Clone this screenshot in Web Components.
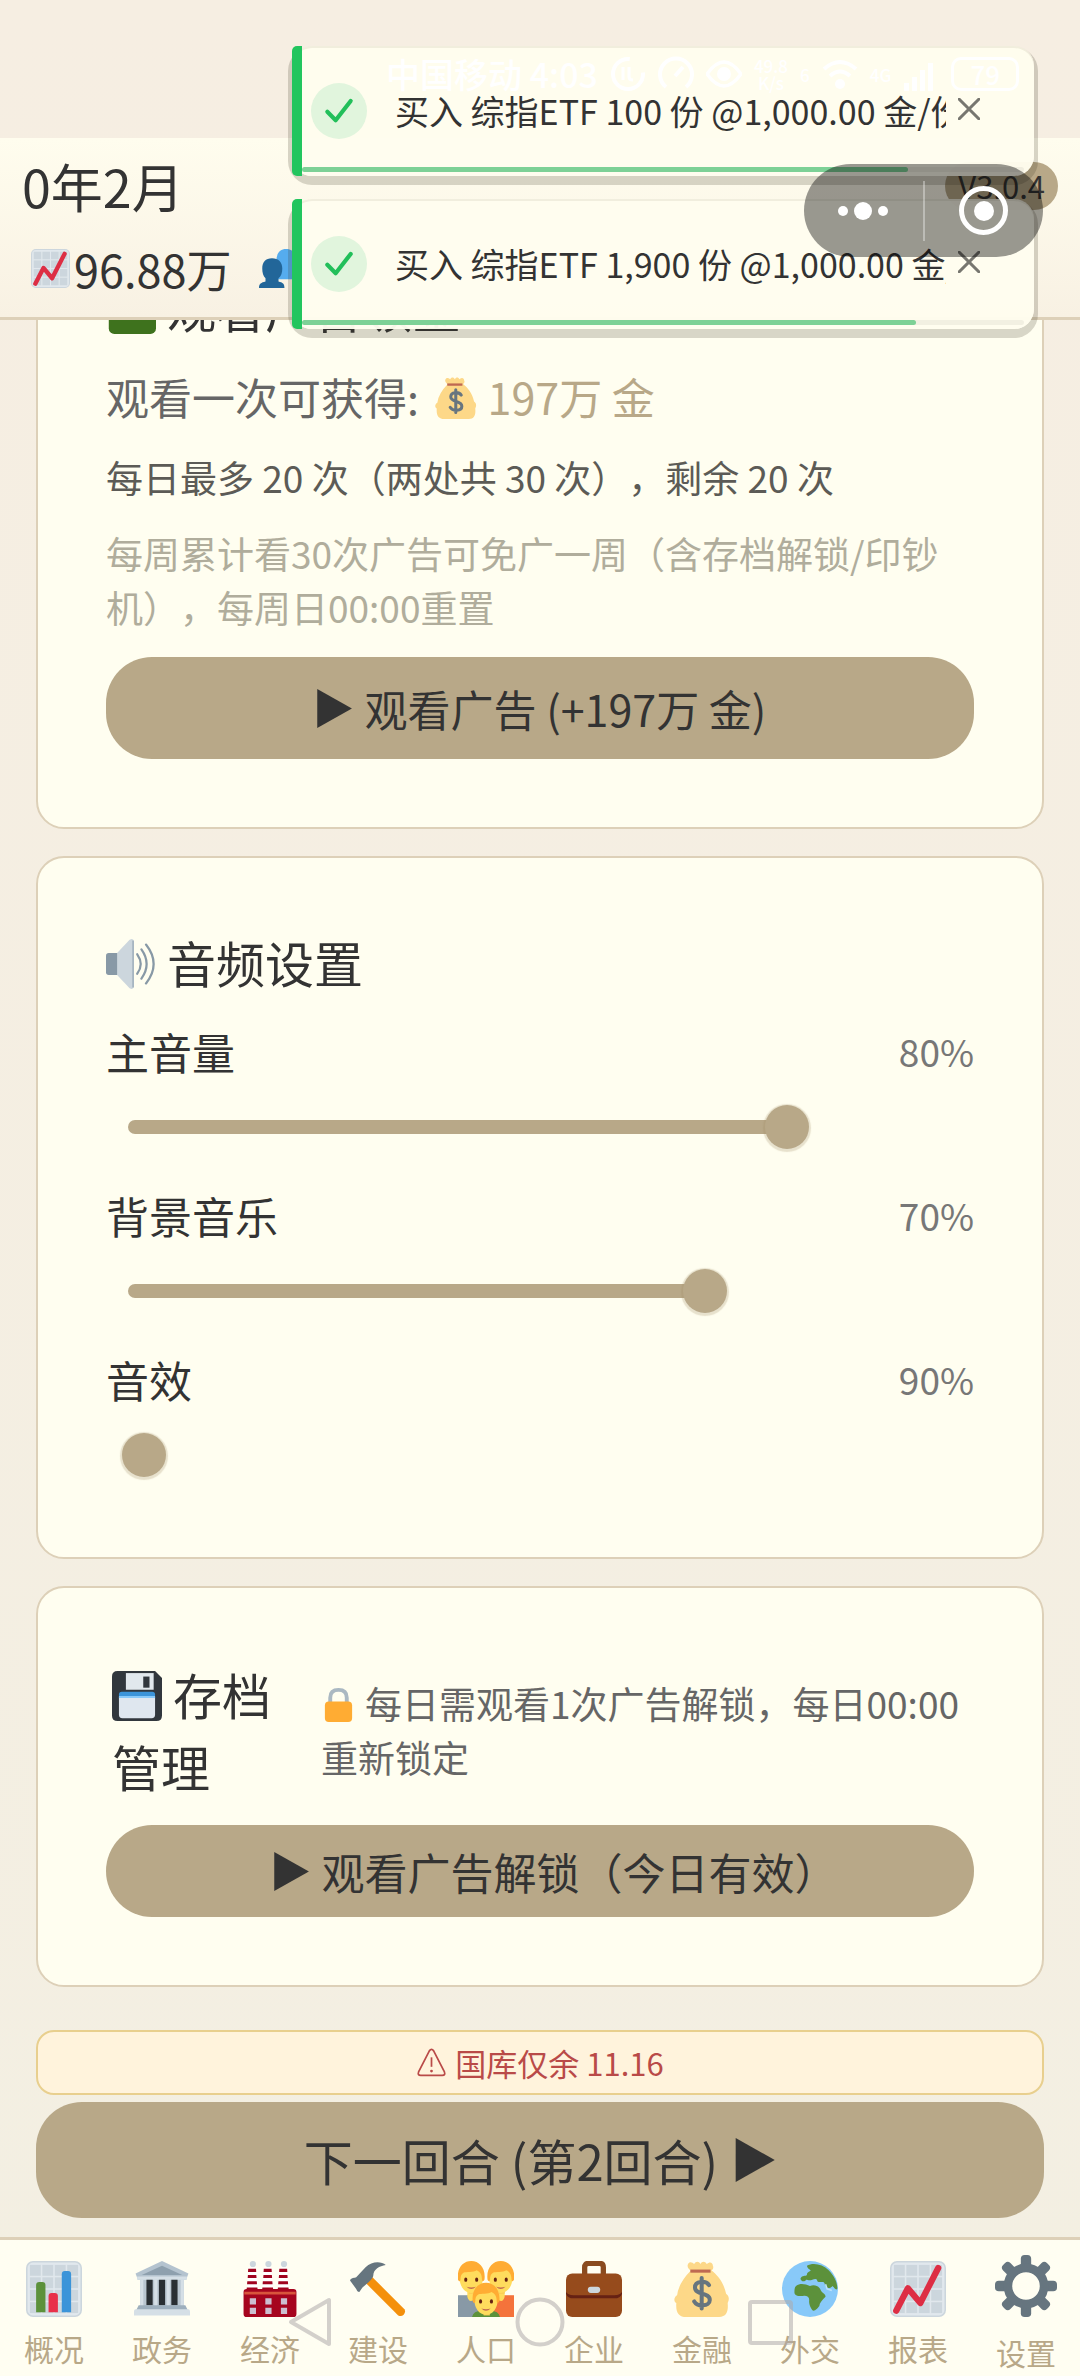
<!DOCTYPE html>
<html lang="zh-CN">
<head>
<meta charset="utf-8">
<meta name="viewport" content="width=device-width">
<title>设置</title>
<style>
  html { --tan: #b8a888; --ink: #333; --paper: #fffef0; --line: #ddd0b8; }
  body {
    margin: 0; min-height: 100vh; color: var(--ink);
    font-family: "Noto Sans CJK SC", sans-serif;
    text-spacing-trim: space-all;
    background: linear-gradient(#f6eee2, #f3efe2);
  }
</style>
</head>
<body>
<game-app></game-app>
<script>
const define = (name, css, html, setup) => {
  const t = document.createElement('template');
  t.innerHTML = `<style>*{box-sizing:border-box}:host{display:block}${css}</style>${html}`;
  customElements.define(name, class extends HTMLElement {
    connectedCallback() {
      if (this.shadowRoot) return;
      this.attachShadow({ mode: 'open' }).append(t.content.cloneNode(true));
      if (setup) setup(this, this.shadowRoot);
    }
  });
};

const grid = (() => {
  let s = '<rect x=".5" y=".5" width="35" height="35" rx="4" fill="#e1e8ed" stroke="#ccd6dd"/>';
  for (const x of [2.5, 10.5, 18.5, 26.5]) for (const y of [2.5, 10.5, 18.5, 26.5]) s += `<rect x="${x}" y="${y}" width="7" height="7" fill="#ccd6dd"/>`;
  return s;
})();
const person = (x, y) => `<g transform="translate(${x} ${y})">
  <path d="M7 13h4v8h-4z" fill="#f9ca55"/><path d="M1 11c0 5 3 9.500 7.500 9.500s7.500-4.500 7.500-9.500c0-4-3-6-7.500-6s-7.500 2-7.500 6z" fill="#ffdc5d"/>
  <path d="M0 12c-1-7 3-12 8.500-12s9.500 5 8.500 12c-.5 1-1.300 1.500-1.600 0 0-3-1-5-3.400-6-2 1.500-7 1-8.500 1.500-1.500.8-1.900 2.500-1.900 4.500-.3 1.500-1.200 1-1.600 0z" fill="#ffac33"/>
  <ellipse cx="5" cy="12" rx="1" ry="1.400" fill="#662113"/><ellipse cx="12" cy="12" rx="1" ry="1.400" fill="#662113"/>
  <path d="M5.500 16.500q3 1 6 0q-3 3-6 0z" fill="#c1694f"/></g>`;
const chimney = x => `<circle cx="${x + 3}" cy="2" r="2" fill="#ccd6dd"/><path d="M${x} 4h5l1.200 15h-7z" fill="#fff"/>
  <path d="M${x} 5h5l.15 2h-5.300zM${x - .2} 9h5.400l.15 2h-5.700zM${x - .6} 13h6.100l.15 2h-6.400zM${x - .9} 17h6.800l.2 2h-7.200z" fill="#a0041e"/>`;
const windows = [5, 15, 25].map(x => `<path d="M${x} 24h4v4h-4zM${x} 30h4v4h-4z" fill="#ccbfd0"/>`).join('');
const teeth = [0, 45, 90, 135, 180, 225, 270, 315].map(a => `<rect x="15" y="0" width="6" height="9" rx="2.200" transform="rotate(${a} 18 18)"/>`).join('');

const ICONS = {
  trend: grid + '<path d="M4 32L11.500 17.500L19.500 27L31 4.500" fill="none" stroke="#dd2e44" stroke-width="4" stroke-linecap="round" stroke-linejoin="round"/>',
  bars: grid + '<path d="M6.500 33V15.500q0-2 2-2h2q2 0 2 2V33z" fill="#5c913b"/><path d="M14.500 33V22.500q0-2 2-2h2q2 0 2 2V33z" fill="#e8304a"/><path d="M23 33V8.500q0-2 2-2h2q2 0 2 2V33z" fill="#3b94d9"/>',
  people: '<path d="M16 12C16 4 19 0 25 0s9 4 9 11c0 4-1 7-3 9v3c4 1 5 2 5 5H14z" fill="#55acee"/><path d="M3 18c0-6 3-9.500 9-9.500s9.500 3.500 9.500 9.500c0 4-1 7-3.500 9v3c4 1 5.500 2 5.500 6H0c0-4 2-5 6-6v-3c-2-2-3-5-3-9z" fill="#226699"/>',
  cash: '<rect x="2" width="34" height="36" rx="4" fill="#3e721d"/><path d="M6 6h26v16h-26z" fill="#5c913b"/>',
  bag: '<path d="M11 6Q3 14 2 22c-2 1-2.500 4-.5 5C1 33 3 36 8 36h21c5 0 6-4 5.500-9C36 24 35 22 33.500 21 32 14 28 9 24 6z" fill="#fdd888"/><path d="M9 2c1-2 3-1 4 0 1-2 3-2 4 0 1-2 3-2 4 0 2-2 4-1 4 1 1 2-1 3-2 4H12c-2-1-4-3-3-5z" fill="#fdd888"/><path d="M10.500 5.500h13v2h-13z" fill="#bf6952"/><path d="M22.500 15.500c-2-3-9-3-9 1.500 0 5 9.500 3 9.500 8 0 4.500-8 4.500-10 1M17.800 11v19.500" fill="none" stroke="#67757f" stroke-width="2.600" stroke-linecap="round"/>',
  speaker: '<path d="M2 10h7v16h-7q-2 0-2-2v-12q0-2 2-2z" fill="#8899a6"/><path d="M8 10L17 .5q3-1.500 3 1.500v32q0 3-3 1.500L8 26z" fill="#ccd6dd"/><path d="M19.500 1v34" stroke="#9aabb8"/><path d="M22.500 11q5 7 0 14M25.500 7.500q7.500 10.500 0 21M28.800 4q11 14 0 28" fill="none" stroke="#8899a6" stroke-width="1.600" stroke-linecap="round"/>',
  floppy: '<path d="M4 0h27l5 5v27q0 4-4 4H4q-4 0-4-4V4q0-4 4-4z" fill="#31373d"/><path d="M10 1.500h20v12h-20z" fill="#e1e8ed"/><path d="M22.500 4h4.500v8h-4.500z" fill="#31373d"/><path d="M5 17q0-2 2-2h22q2 0 2 2v4H5z" fill="#3b94d9"/><path d="M5 18.500h26v13q0 2.500-2.500 2.500h-21Q5 34 5 31.500z" fill="#dfe7ef"/><path d="M5 18h26v1.500H5z" fill="#88c9f9"/>',
  lock: '<path d="M9.500 19V11q0-8 8.500-8t8.500 8v8" fill="none" stroke="#aab8c2" stroke-width="4"/><rect x="4" y="15" width="28" height="21" rx="4" fill="#ffac33"/>',
  bank: '<path d="M4 12h28v18H4z" fill="#b9c6d0"/><path d="M18 0L35 8l-1.500 4H2.500L1 8z" fill="#b4c3cf"/><path d="M18 3L31 9H5z" fill="#8ea0ae"/><path d="M2 10h32v2H2z" fill="#d5dfe6"/><path d="M8 12h4v16.500H8zM16 12h4v16.500h-4zM24 12h4v16.500h-4z" fill="#292f33"/><path d="M4 12h2v17H4zM13 12h2v17h-2zM21 12h2v17h-2zM30 12h2v17h-2z" fill="#d5dfe6"/><path d="M3 28.500h30l2 4H1z" fill="#9dafbd"/><path d="M1 31h34q1 0 1 2v2H0v-2q0-2 1-2z" fill="#d5dfe6"/>',
  factory: chimney(4) + chimney(14) + chimney(24) + '<rect x="1" y="18" width="34" height="18" rx="2" fill="#a6051f"/><path d="M1.500 19.800h33v1.700h-33z" fill="#d8553c"/>' + windows,
  hammer: '<path d="M7 11l5-3L35 31q1 2-.5 3.500t-3.500.5z" fill="#f4900c"/><path d="M0 12.500c1-2 3-1.500 4-2L10 4c4-4 10-4 13-1.500-4 .5-8 3-8 6.500 0 2-2.500 4-4 5.500L8 17l-2 3c-1 0-1.500-1-2-2z" fill="#66757f"/>',
  family: '<path d="M0 22h16v14H0z" fill="#8899a6"/><path d="M20 22h16v14H20z" fill="#f4733b"/><path d="M6 18h4v7q-3 2-4-2zM26 18h4v5q-1 4-4 2z" fill="#ffdc5d"/>' + person(0, 0) + person(19, 0) + '<path d="M9 36q1-4 6-4h6q5 0 6 4z" fill="#5c913b"/><path d="M15 30h6v3q-3 2-6 0z" fill="#f9ca55"/>' + person(9.5, 14),
  case: '<path d="M12 9V4q0-2.500 2.500-2.500h7q2.500 0 2.500 2.500v5" fill="none" stroke="#8a4b20" stroke-width="3.400"/><rect y="8" width="36" height="28" rx="4" fill="#964b1c"/><path d="M0 20v1q1 3 5 3h26q4 0 5-3v-1q-1 2-5 2H5q-4 0-5-2z" fill="#662113"/><rect x="14" y="16.500" width="8" height="4" rx="2" fill="#ccd6dd"/>',
  globe: '<circle cx="18" cy="18" r="18" fill="#88c9f9"/><path d="M16 3c4-2 10-1 14 3 3 3 6 8 5.500 12-1 1-2-1-3-2-1 1-2 2-3.500 1-2-1-1-3-2.500-3.500-2 0-4 .5-4-1.500-1-1-2 0-3 0-2 1-3 0-4 0-1 2-4 1-3.500-1 1-2 3-1 4-2 0-2 2-2 2.500-3-1-1-2-1-2.500-3z" fill="#5c913b"/><path d="M9 16c3-2 6-1 9 0 3-1 6 0 7 3 1 2 3 2 3 4-2 2-4 4-4 6-1 1-2 3-4 3-1-1-3-4-2.500-7 0-2-2-3-4-2.500-3 0-5 0-5.500-2 0-2 0-3.500 1-4.500z" fill="#5c913b"/><path d="M28 15l1 3 3 1" fill="none" stroke="#bfe3fb" stroke-width="1"/>',
  gear: `<g fill="#66757f">${teeth}</g><circle cx="18" cy="18" r="10.500" fill="none" stroke="#66757f" stroke-width="5"/>`,
  warn: '<path d="M15.500 4.500q2.500-3.500 5 0L33 29q1.500 4-2.500 4h-25Q1.500 33 3 29z" fill="none" stroke="currentColor" stroke-width="2"/><path d="M18 12v11" stroke="currentColor" stroke-width="2"/><circle cx="18" cy="28" r="1.600" fill="currentColor"/>',
  play: '<path d="M3 0L35 18L3 36z" fill="currentColor"/>',
  check: '<path d="M4 19L14 29L32 6" fill="none" stroke="currentColor" stroke-width="5" stroke-linecap="round" stroke-linejoin="round"/>',
  close: '<path d="M2 2L34 34M34 2L2 34" fill="none" stroke="currentColor" stroke-width="5" stroke-linecap="round"/>',
  sync: '<circle cx="18" cy="18" r="15" fill="none" stroke="currentColor" stroke-width="4" stroke-dasharray="72 20"/><path d="M13 11v13M19 11v10q0 3 4 3" fill="none" stroke="currentColor" stroke-width="3"/>',
  gauge: '<path d="M8 31A16 16 0 1 1 28 31M17 20L25 11" fill="none" stroke="currentColor" stroke-width="4"/>',
  eye: '<path d="M1 18Q18-6 35 18Q18 42 1 18z" fill="none" stroke="currentColor" stroke-width="3.500"/><circle cx="18" cy="18" r="7" fill="currentColor"/>',
  wifi: '<path d="M2 13Q18-1 34 13M8 20Q18 11 28 20" fill="none" stroke="currentColor" stroke-width="4"/><circle cx="18" cy="28" r="5" fill="currentColor"/>',
  signal: '<path d="M1 27h5v8h-5zM9 21h5v14h-5zM17 14h5v21h-5zM25 7h5v28h-5z" fill="currentColor"/>'
};

define('g-icon', ':host{display:inline-block;flex:none;width:1em;height:1em}svg{display:block;width:100%;height:100%}',
  '<svg viewBox="0 0 36 36" aria-hidden="true"></svg>',
  (el, root) => { root.querySelector('svg').innerHTML = ICONS[el.getAttribute('name')]; });

define('status-strip', `
  :host { position: relative; z-index: 4; height: 138px; padding: 56px 54px 0 386px; color: #fff; pointer-events: none; }
  div { display: flex; align-items: center; gap: 12px; height: 36px; font-size: 34px; line-height: 36px; font-weight: 500; white-space: nowrap; }
  small { font-size: 17px; line-height: 17px; text-align: center; }
  g-icon { font-size: 36px; }
  b { border: 3px solid #fff; border-radius: 10px; font-size: 26px; line-height: 28px; padding: 0 16px; font-weight: 500; }`,
  `<div><span>中国移动 4:03</span><g-icon name="sync"></g-icon><g-icon name="gauge"></g-icon><g-icon name="eye"></g-icon><small>49.8<br>K/s</small><small>6</small><g-icon name="wifi"></g-icon><small>4G</small><g-icon name="signal"></g-icon><b>79</b></div>`);

define('game-header', `
  :host { position: relative; z-index: 1; padding: 10px 22px 16px; background: linear-gradient(#fffdee, #f8f1e3); border-bottom: 3px solid var(--line); }
  div { display: flex; align-items: center; justify-content: space-between; }
  h1 { margin: 0; font-size: 52px; line-height: 76px; font-weight: 400; }
  .ver { background: var(--tan); border-radius: 24px; padding: 0 13px; font-size: 31px; line-height: 48px; }
  .stats { justify-content: flex-start; margin-top: 12px; padding-left: 9px; font-size: 45px; line-height: 65px; }
  g-icon { font-size: 39px; }
  .stats span { margin: 0 28px 0 4px; }`,
  `<div><h1>0年2月</h1><span class="ver">V3.0.4</span></div>
   <div class="stats"><g-icon name="trend"></g-icon><span>96.88万</span><g-icon name="people"></g-icon></div>`);

define('toast-item', `
  :host { position: relative; display: flex; align-items: center; height: 130px; padding: 0 54px 0 19px;
    background: rgba(255,253,238,.97); border-radius: 20px; box-shadow: inset 0 2px 0 rgba(80,60,20,.08), 0 5px 0 4px rgba(60,55,35,.2); }
  :host::before { content: ""; position: absolute; inset: 0 auto 0 0; width: 10px; background: #22c55e; border-radius: 5px 0 0 5px; }
  .ok { flex: none; display: grid; place-items: center; width: 56px; height: 56px; border-radius: 50%; background: #e1f5dd; color: #22bf5a; font-size: 30px; }
  p { flex: 1; min-width: 0; margin: 0 12px 0 28px; overflow: hidden; white-space: nowrap; font-size: 34px; line-height: 40px; padding: 2px 0; }
  button { flex: none; display: block; border: 0; padding: 0; background: none; color: #77766f; font-size: 22px; line-height: 22px; }
  .track { position: absolute; inset: auto 10px 4px 10px; height: 5px; border-radius: 3px; background: rgba(0,0,0,.05); }
  .track i { display: block; height: 5px; border-radius: 3px; background: #7dd196; }`,
  `<span class="ok"><g-icon name="check"></g-icon></span><p><slot></slot></p><button aria-label="关闭"><g-icon name="close"></g-icon></button><div class="track"><i></i></div>`,
  (el, root) => { root.querySelector('i').style.width = el.getAttribute('progress') + '%'; });

define('mini-capsule', `
  :host { display: flex; align-items: center; width: 239px; height: 93px; border-radius: 47px; background: rgba(0,0,0,.4); }
  button { flex: 1; display: flex; align-items: center; justify-content: center; gap: 6px; height: 93px; border: 0; padding: 0; background: none; }
  i { width: 10px; height: 10px; border-radius: 50%; background: #fff; }
  i.big { width: 18px; height: 18px; }
  hr { margin: 0; border: 0; width: 2px; height: 60px; background: rgba(255,255,255,.35); }
  .ring { display: grid; place-items: center; width: 49px; height: 49px; border: 5px solid #fff; border-radius: 50%; }
  .ring i { width: 20px; height: 20px; }`,
  `<button aria-label="更多"><i></i><i class="big"></i><i></i></button><hr><button aria-label="关闭"><span class="ring"><i></i></span></button>`);

define('game-card', `
  :host { display: flex; flex-direction: column; gap: 21px; padding: 68px; background: var(--paper); border: 2px solid var(--line); border-radius: 28px; }
  ::slotted(pill-button) { margin-top: 2px; }`,
  `<slot></slot>`);

define('card-title', `
  h2 { margin: 0; font-size: 49px; line-height: 72px; font-weight: 400; }
  g-icon { font-size: 50px; vertical-align: -6px; margin-right: 11px; }`,
  `<h2><slot></slot></h2>`, (el, root) => {
    const icon = document.createElement('g-icon');
    icon.setAttribute('name', el.getAttribute('icon'));
    root.querySelector('h2').prepend(icon);
  });

define('pill-button', `
  button { display: flex; align-items: center; justify-content: center; gap: 12px; width: 100%; border: 0; border-radius: 46px;
    padding: var(--pad, 14px) 0; background: var(--tan); color: var(--ink); font: inherit; font-size: 43px; line-height: 64px; }
  :host([large]) button { font-size: 49px; line-height: 72px; }
  g-icon { font-size: 39px; }
  :host([large]) g-icon { font-size: 44px; }
  :host([large]) button { flex-direction: row-reverse; gap: 14px; }
  /* a closing full-width bracket hangs, so the visible glyphs stay centred */
  :host([hang]) span { margin-right: -28px; }`,
  `<button><g-icon name="play"></g-icon><span><slot></slot></span></button>`);

define('ad-info', `
  :host { display: flex; flex-direction: column; gap: 21px; }
  p { margin: 0; color: #666; font-size: 43px; line-height: 64px; }
  p.limit { font-size: 37px; line-height: 56px; color: #5c5b56; }
  p.note { font-size: 37px; line-height: 54px; color: #b0ad9c; }
  strong { font-weight: 400; color: var(--tan); }
  g-icon { font-size: 42px; vertical-align: -4px; margin: 0 11px 0 6px; }`,
  `<p>观看一次可获得: <g-icon name="bag"></g-icon><strong>197万 金</strong></p>
   <p class="limit">每日最多 20 次（两处共 30 次），剩余 20 次</p>
   <p class="note">每周累计看30次广告可免广一周（含存档解锁/印钞机），每周日00:00重置</p>`);

define('volume-slider', `
  :host { padding-bottom: 34px; }
  :host(:last-of-type) { padding-bottom: 12px; }
  .row { display: flex; justify-content: space-between; align-items: center; font-size: 43px; line-height: 64px; }
  output { color: #777; font-size: 37px; }
  .box { display: grid; align-items: center; margin-top: 22px; }
  .box > * { grid-area: 1 / 1; }
  .fill { margin: 0 22px; }
  .fill i { display: block; height: 14px; border-radius: 7px; background: var(--tan); }
  :host(.idle) .fill { visibility: hidden; }
  input { -webkit-appearance: none; appearance: none; width: 100%; height: 44px; margin: 0; background: none; }
  input::-webkit-slider-thumb { -webkit-appearance: none; width: 44px; height: 44px; border-radius: 50%; background: var(--tan); box-shadow: 0 1px 1px 2px rgba(160,140,100,.25); }`,
  `<div class="row"><label for="range"></label><output for="range"></output></div>
   <div class="box"><div class="fill"><i></i></div><input id="range" type="range" min="0" max="100"></div>`,
  (el, root) => {
    root.querySelector('label').textContent = el.getAttribute('label');
    root.querySelector('output').textContent = el.getAttribute('shown') + '%';
    root.querySelector('input').value = el.getAttribute('value');
    root.querySelector('i').style.width = el.getAttribute('value') + '%';
  });

define('save-head', `
  :host { display: grid; grid-template-columns: 180px 1fr; gap: 29px; align-items: center; padding: 2px 6px 0; }
  p { margin: 0; color: #666; font-size: 37px; line-height: 54px; }
  g-icon { font-size: 35px; vertical-align: -3px; margin-right: 9px; }`,
  `<card-title icon="floppy">存档管理</card-title><p><g-icon name="lock"></g-icon>每日需观看1次广告解锁，每日00:00重新锁定</p>`);

define('turn-bar', `
  :host { display: flex; flex-direction: column; gap: 7px; padding: 43px 36px 19px; }
  .warn { display: flex; align-items: center; justify-content: center; gap: 8px; border: 2px solid #e8cf8e; border-radius: 18px;
    background: #fff3dc; color: #b94a48; font-size: 31px; line-height: 61px; }`,
  `<div class="warn" role="alert"><g-icon name="warn"></g-icon>国库仅余 11.16</div><pill-button large style="--pad:22px">下一回合 (第2回合)</pill-button>`);

define('nav-item', `
  a { display: flex; flex-direction: column; align-items: center; color: var(--tan); text-decoration: none; font-size: 30px; line-height: 44px; }
  g-icon { font-size: 56px; margin: 21px 0 9px; }
  :host([current]) g-icon { font-size: 62px; margin: 15px 0 13px; }`,
  `<a href="#"><span><slot></slot></span></a>`, (el, root) => {
    const icon = document.createElement('g-icon');
    icon.setAttribute('name', el.getAttribute('icon'));
    root.querySelector('a').prepend(icon);
  });

define('nav-bar', `
  :host { flex: 1; background: #fffef2; border-top: 3px solid var(--line); }
  nav { display: grid; grid-template-columns: repeat(10, 1fr); }`,
  `<nav><nav-item icon="bars">概况</nav-item><nav-item icon="bank">政务</nav-item><nav-item icon="factory">经济</nav-item><nav-item icon="hammer">建设</nav-item><nav-item icon="family">人口</nav-item><nav-item icon="case">企业</nav-item><nav-item icon="bag">金融</nav-item><nav-item icon="globe">外交</nav-item><nav-item icon="trend">报表</nav-item><nav-item icon="gear" current>设置</nav-item></nav>`);

define('system-keys', `
  :host { display: flex; justify-content: space-between; align-items: center; height: 50px; color: rgba(175,170,172,.55); }
  svg { display: block; width: 50px; height: 50px; fill: none; stroke: currentColor; stroke-width: 4; stroke-linejoin: round; }`,
  `<svg viewBox="0 0 50 50"><path d="M6 25L44 3V47z"/></svg><svg viewBox="0 0 50 50"><circle cx="25" cy="25" r="22.500"/></svg><svg viewBox="0 0 50 50"><rect x="5" y="5" width="41" height="41" rx="2"/></svg>`);

define('game-app', `
  :host { position: relative; display: flex; flex-direction: column; min-height: 100vh; }
  main { display: flex; flex-direction: column; gap: 27px; margin-top: -119px; padding: 0 36px; }
  .toasts { position: absolute; z-index: 2; top: 46px; right: 46px; left: 292px; display: flex; flex-direction: column; gap: 23px; }
  mini-capsule { position: absolute; z-index: 3; top: 164px; right: 37px; }
  system-keys { position: absolute; z-index: 3; bottom: 29px; left: 26.4%; right: 26.4%; }`,
  `<status-strip></status-strip>
   <game-header></game-header>
   <main>
     <game-card><card-title icon="cash">观看广告领金</card-title><ad-info></ad-info><pill-button style="--pad:19px">观看广告 (+197万 金)</pill-button></game-card>
     <game-card><card-title icon="speaker">音频设置</card-title><div>
       <volume-slider label="主音量" value="80" shown="80"></volume-slider>
       <volume-slider label="背景音乐" value="70" shown="70"></volume-slider>
       <volume-slider class="idle" label="音效" value="2" shown="90"></volume-slider></div></game-card>
     <game-card><save-head></save-head><pill-button hang>观看广告解锁（今日有效）</pill-button></game-card>
   </main>
   <turn-bar></turn-bar>
   <nav-bar></nav-bar>
   <div class="toasts"><toast-item progress="84">买入 综指ETF 100 份 @1,000.00 金/份</toast-item><toast-item progress="85">买入 综指ETF 1,900 份 @1,000.00 金/份</toast-item></div>
   <mini-capsule></mini-capsule>
   <system-keys></system-keys>`);
</script>
</body>
</html>
